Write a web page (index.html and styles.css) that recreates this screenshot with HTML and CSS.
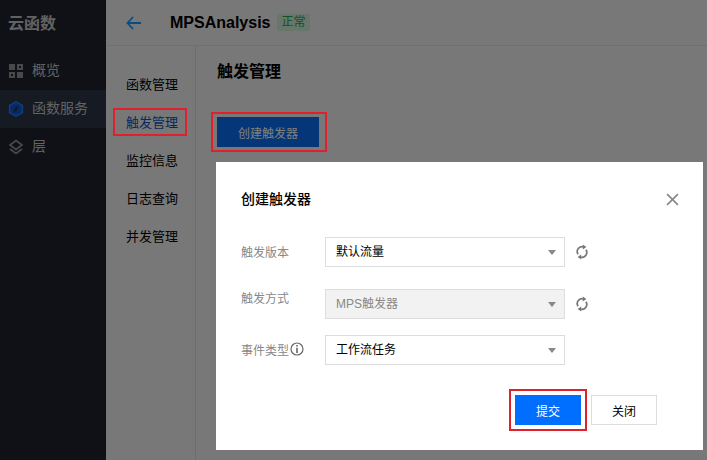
FILE: index.html
```html
<!DOCTYPE html>
<html lang="zh-CN">
<head>
    <meta charset="UTF-8">
    <title>云函数 - 触发管理</title>
    <link rel="stylesheet" href="styles.css">
</head>
<body>
    <!-- 左侧菜单 -->
    <aside class="sidebar">
        <div class="brand">云函数</div>
        <ul class="side-list">
            <li class="side-item">
                <svg class="side-icon" viewBox="0 0 16 16"><path d="M1 1h6v6H1zM9 1h6v6H9zM1 9h6v6H1zM9 9h6v6H9z" fill="#48494b"/><path d="M11 3h2v2h-2zM3 11h2v2H3z" fill="#0f1116"/></svg>
                <span class="side-text">概览</span>
            </li>
            <li class="side-item active">
                <svg class="side-icon" viewBox="0 0 16 16"><path d="M8 0.8l6.4 3.6v7.2L8 15.2l-6.4-3.6V4.4z" fill="#082a60" stroke="#0b3f8e" stroke-width="1.5"/><path d="M10.6 4.6L8.9 9.3 5.4 11.4l1.7-4.7z" fill="#14181f"/></svg>
                <span class="side-text">函数服务</span>
            </li>
            <li class="side-item">
                <svg class="side-icon" viewBox="0 0 16 16"><path d="M8 1.5l6 4.5-6 4.5L2 6z" fill="none" stroke="#48494b" stroke-width="1.7"/><path d="M2 10l6 4.5 6-4.5" fill="none" stroke="#48494b" stroke-width="1.7"/></svg>
                <span class="side-text">层</span>
            </li>
        </ul>
    </aside>

    <div class="main">
        <header class="top-bar">
            <svg class="back" viewBox="0 0 16 14"><path d="M7 1L1.5 7 7 13M2 7h13" fill="none" stroke="#0a4ca8" stroke-width="1.8"/></svg>
            <span class="fn-name">MPSAnalysis</span>
            <span class="badge">正常</span>
        </header>
        <div class="body-wrap">
            <ul class="sub-nav">
                <li class="sub-item">函数管理</li>
                <li class="sub-item current">触发管理</li>
                <li class="sub-item">监控信息</li>
                <li class="sub-item">日志查询</li>
                <li class="sub-item">并发管理</li>
            </ul>
            <section class="content">
                <h2 class="content-title">触发管理</h2>
                <button class="create-btn">创建触发器</button>
            </section>
        </div>
    </div>

    <!-- 遮罩和弹窗 -->
    <div class="mask"></div>
    <div class="mark mark-nav"></div>
    <div class="mark mark-create"></div>

    <div class="dialog">
        <div class="dialog-head">
            <h3 class="dialog-title">创建触发器</h3>
            <svg class="close-x" viewBox="0 0 12 12"><path d="M1 1l10 10M11 1L1 11" stroke="#888" stroke-width="1.5"/></svg>
        </div>
        <div class="form">
            <div class="form-row">
                <label class="form-label">触发版本</label>
                <div class="select">默认流量</div>
                <svg class="refresh" viewBox="0 0 12 16"><path d="M8.6 3.2A5 5 0 0 0 2 10.2M3.4 12.8A5 5 0 0 0 10 5.8" fill="none" stroke="#777" stroke-width="1.7"/><path d="M6.8 0.5v5l3.6-2.5zM5.2 15.5v-5l-3.6 2.5z" fill="#777"/></svg>
            </div>
            <div class="form-row">
                <label class="form-label raised">触发方式</label>
                <div class="select disabled">MPS触发器</div>
                <svg class="refresh" viewBox="0 0 12 16"><path d="M8.6 3.2A5 5 0 0 0 2 10.2M3.4 12.8A5 5 0 0 0 10 5.8" fill="none" stroke="#777" stroke-width="1.7"/><path d="M6.8 0.5v5l3.6-2.5zM5.2 15.5v-5l-3.6 2.5z" fill="#777"/></svg>
            </div>
            <div class="form-row tight">
                <label class="form-label">事件类型<svg class="info" viewBox="0 0 14 14"><circle cx="7" cy="7" r="6" fill="none" stroke="#666" stroke-width="1.2"/><path d="M6.2 3h1.6v1.6H6.2zM6.2 5.8h1.6V11H6.2z" fill="#666"/></svg></label>
                <div class="select">工作流任务</div>
            </div>
        </div>
        <div class="dialog-foot">
            <button class="btn btn-primary">提交</button>
            <button class="btn">关闭</button>
        </div>
    </div>
</body>
</html>
```

FILE: styles.css
```css
* {
    margin: 0;
    padding: 0;
    box-sizing: border-box;
    font-family: "Liberation Sans", "Noto Sans CJK SC", sans-serif;
}

body {
    width: 707px;
    height: 460px;
    overflow: hidden;
    display: flex;
    background: #f0f0f0;
    color: #000;
}

/* 左侧菜单 */
.sidebar {
    width: 106px;
    flex-shrink: 0;
    background: #1e222c;
    color: #c4c4c4;
}

.brand {
    height: 52px;
    padding: 13px 0 0 8px;
    font-size: 16px;
    line-height: 22px;
    font-weight: bold;
}

.side-list {
    list-style: none;
}

.side-item {
    height: 38px;
    display: flex;
    align-items: center;
    gap: 8px;
    padding-left: 8px;
    font-size: 14px;
}

.side-text {
    line-height: 36px;
    height: 38px;
}

.side-item.active {
    background: #2c3444;
}

.side-icon {
    width: 16px;
    height: 16px;
    filter: brightness(2);
}

/* 主体 */
.main {
    flex: 1;
    display: flex;
    flex-direction: column;
}

.top-bar {
    height: 46px;
    flex-shrink: 0;
    display: flex;
    align-items: center;
    padding: 0 0 0 20px;
    border-bottom: 1px solid #e0e0e0;
    background: #f0f0f0;
}

.back {
    width: 16px;
    height: 14px;
    filter: brightness(2);
}

.fn-name {
    margin-left: 28px;
    font-size: 16px;
    font-weight: bold;
}

.badge {
    margin-left: 7px;
    padding: 0 4px;
    height: 17px;
    border-radius: 2px;
    font-size: 12px;
    line-height: 17px;
    color: #25a552;
    background: #d2ecd9;
}

.body-wrap {
    flex: 1;
    display: flex;
}

.sub-nav {
    width: 90px;
    flex-shrink: 0;
    padding-top: 20px;
    list-style: none;
    border-right: 1px solid #dcdcdc;
}

.sub-item {
    height: 38px;
    line-height: 38px;
    padding-left: 20px;
    font-size: 13px;
    color: #000;
}

.sub-item.current {
    color: #0a52c0;
}

.content {
    flex: 1;
    padding: 14px 0 0 21px;
}

.content-title {
    font-size: 16px;
    line-height: 24px;
    font-weight: bold;
    color: #000;
}

.create-btn {
    display: block;
    width: 102px;
    height: 30px;
    margin-top: 33px;
    border: none;
    font-size: 12px;
    color: #fff;
    background: #0a6cf0;
}

/* 遮罩 */
.mask {
    position: fixed;
    inset: 0;
    background: rgba(0, 0, 0, 0.5);
}

.mark {
    position: fixed;
    border: 2px solid #e0202c;
}

.mark-nav {
    left: 113px;
    top: 108px;
    width: 74px;
    height: 28px;
}

.mark-create {
    left: 211px;
    top: 112px;
    width: 116px;
    height: 40px;
}

/* 弹窗 */
.dialog {
    position: fixed;
    left: 216px;
    top: 162px;
    width: 487px;
    height: 288px;
    padding: 0 25px;
    background: #fff;
}

.dialog-head {
    height: 75px;
    display: flex;
    align-items: center;
    justify-content: space-between;
}

.dialog-title {
    font-size: 14px;
    line-height: 20px;
    margin-top: -2px;
    font-weight: 500;
    color: #000;
}

.close-x {
    width: 13px;
    height: 13px;
    margin: 0 -1px 0 0;
}

.form {
    display: flex;
    flex-direction: column;
    gap: 22px;
}

.form-row {
    display: flex;
    align-items: center;
    height: 30px;
}

.form-row.tight {
    margin-top: -6px;
}

.form-label {
    width: 84px;
    display: flex;
    align-items: center;
    height: 28px;
    margin-bottom: 2px;
    font-size: 12px;
    color: #888;
}

.form-label.raised {
    margin-bottom: 13px;
}

.info {
    width: 14px;
    height: 14px;
    margin-left: 1px;
}

.select {
    position: relative;
    width: 240px;
    height: 30px;
    padding-left: 10px;
    border: 1px solid #ddd;
    font-size: 12px;
    line-height: 28px;
    color: #000;
}

.select::after {
    content: '';
    position: absolute;
    right: 8px;
    top: 12px;
    border-left: 4px solid transparent;
    border-right: 4px solid transparent;
    border-top: 5px solid #888;
}

.select.disabled {
    background: #f2f2f2;
    color: #888;
}

.refresh {
    width: 12px;
    height: 16px;
    margin-left: 11px;
}

.dialog-foot {
    display: flex;
    justify-content: flex-end;
    gap: 10px;
    margin: 30px 21px 0 0;
}

.btn {
    width: 66px;
    height: 30px;
    border: 1px solid #ddd;
    background: #fff;
    font-size: 12px;
    color: #000;
}

.btn-primary {
    border: none;
    background: #006eff;
    color: #fff;
    outline: 2px solid #e0202c;
    outline-offset: 4px;
}
```
